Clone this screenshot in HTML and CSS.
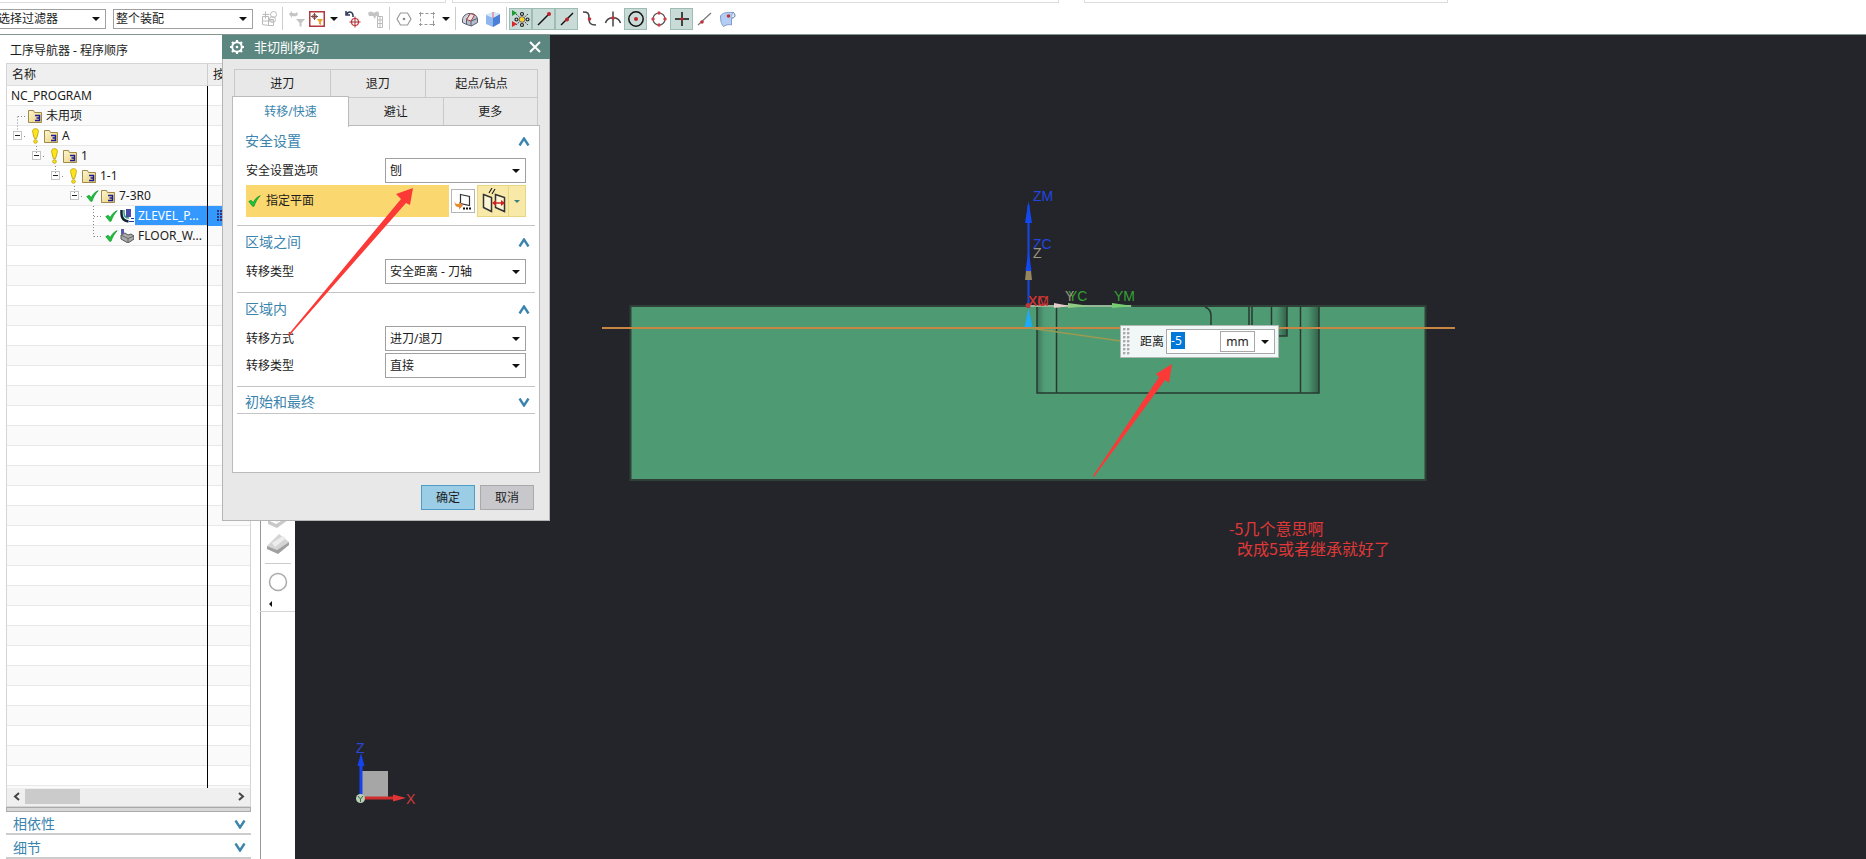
FILE: index.html
```
<!DOCTYPE html>
<html lang="zh-CN">
<head>
<meta charset="utf-8">
<title>工序导航器</title>
<link rel="stylesheet" href="styles.css">
</head>
<body>
<svg class="defs" width="0" height="0" aria-hidden="true">
  <defs>
    <linearGradient id="fold" x1="0" y1="0" x2="1" y2="1"><stop offset="0" stop-color="#fdf6cf"/><stop offset="1" stop-color="#e8cf79"/></linearGradient>
    <symbol id="folder" viewBox="0 0 14 14">
      <path d="M.5 13.500V1.500h5l1 2h7v10z" fill="url(#fold)" stroke="#a08a4a"/>
      <path d="M7 6.500h4.500v5H7M8.500 9h3" fill="none" stroke="#1c1c9a" stroke-width="1.500"/>
    </symbol>
    <symbol id="warn" viewBox="0 0 13 16">
      <path d="M6.500.7C3.500.7 3.200 3 4 5.500l1.400 5h2.200l1.400-5C9.800 3 9.500.7 6.500.7z" fill="#ffe41c" stroke="#b59a00" stroke-width=".8"/>
      <circle cx="6.500" cy="13.500" r="1.800" fill="#ffe41c" stroke="#b59a00" stroke-width=".8"/>
    </symbol>
    <symbol id="check" viewBox="0 0 13 12">
      <path d="M.8 6.500l2.400-1.200 2 2.200C7 4 9 2 12.200.7 9.500 3.500 7.500 7 6 11.300H4.600z" fill="#1fc23c" stroke="#0e9429" stroke-width=".7"/>
    </symbol>
    <symbol id="up" viewBox="0 0 12 9"><path d="M1.500 8.500 6 1.500l4.500 7" fill="none" stroke="#3a84ad" stroke-width="2.400"/></symbol>
    <symbol id="down" viewBox="0 0 12 9"><path d="M1.500.5 6 7.500l4.500-7" fill="none" stroke="#3a84ad" stroke-width="2.400"/></symbol>
  </defs>
</svg>

<header class="ribbon">
  <div class="ribbon-edges"><span class="edge edge-a"></span><span class="edge edge-b"></span><span class="edge edge-c"></span></div>
  <div class="toolbar">
    <div class="pick pick-filter"><select aria-label="选择过滤器"><option>选择过滤器</option></select></div>
    <div class="pick pick-scope"><select aria-label="整个装配"><option>整个装配</option></select></div>
    <button class="tool tool-first" aria-label="装配"><svg width="18" height="18" fill="none" stroke="#bbb"><path d="M2.500 6.500h6v9l-6-1zM8.500 9.500h5v6h-5M2.500 11h11M5.500 1.500v7M2.500 4.500h7"/><circle cx="13.500" cy="4.500" r="3"/><circle cx="12.500" cy="9.500" r="3"/></svg></button>
    <i class="sep"></i>
    <button class="tool" aria-label="重置过滤"><svg width="18" height="18" fill="#c4c4c4"><path d="M1 4l3-3v2c3 0 4 1 5-1 2 3 0 5-5 4v2zM8 9h9l-3.500 4v4l-2-1v-3z"/></svg></button>
    <button class="tool tool-boxed" aria-label="点过滤"><svg width="16" height="16"><rect x=".75" y=".75" width="14.500" height="14.500" fill="#fff" stroke="#b3383d" stroke-width="1.500"/><circle cx="5.500" cy="5.500" r="2" fill="none" stroke="#7a4a4a"/><path d="M5.500 2v7M2 5.500h7" stroke="#7a4a4a"/><path d="M8 8h6l-2 3v3l-2-1v-2z" fill="#f0a531"/></svg></button>
    <button class="tool-arrow" aria-label="更多过滤"></button>
    <button class="tool" aria-label="撤销选择"><svg width="18" height="18" fill="none"><path d="M2 1v4h4M2 5c2-4 6-4 7 0v2" stroke="#2f3a56" stroke-width="1.500"/><circle cx="11" cy="12" r="3.500" stroke="#c8383d" stroke-width="1.200"/><path d="M11 6.500v11M5.500 12h11" stroke="#a12d33"/></svg></button>
    <button class="tool" aria-label="查找"><svg width="18" height="18" fill="#c4c4c4"><path d="M1 3c2-2 4-2 6 0 2-2 4-2 5 0v3H9L8 9 6 6H2z"/><path d="M10.500 6.500h5v11h-5zM10.500 10h5M10.500 13.500h5M13 6.500v11" fill="none" stroke="#bbb"/></svg></button>
    <i class="sep"></i>
    <button class="tool" aria-label="多边形"><svg width="18" height="18"><path d="M5.500 3h7L16 9l-3.500 6h-7L2 9z" fill="none" stroke="#999" stroke-width="1.200"/><circle cx="9" cy="9" r="1.300" fill="#888"/></svg></button>
    <button class="tool" aria-label="矩形选择"><svg width="18" height="18" fill="none" stroke="#999"><rect x="2.500" y="3.500" width="13" height="11" stroke-dasharray="3 2"/><path d="M1 3.500h3M2.500 2v3M14 3.500h3M15.500 2v3M1 14.500h3M2.500 13v3M14 14.500h3M15.500 13v3"/></svg></button>
    <button class="tool-arrow" aria-label="更多选择"></button>
    <i class="sep"></i>
    <button class="tool" aria-label="面"><svg width="18" height="18" stroke="#5a5f6e"><path d="M1.500 10c0-4 4-7 8-6.500l-4 6v5l-4-2z" fill="#cfd3de"/><path d="M9.500 3.500c4 0 6 2 7 5v4l-6 3.500-5-1.500v-5z" fill="#b6bccb"/><path d="M5.500 9.500l4-6 4 1.500-3.500 6z" fill="#f3e3e3" stroke="#a44"/><path d="M10 11v5M10 11l6.500-2.500" fill="none"/></svg></button>
    <button class="tool" aria-label="实体"><svg width="18" height="18"><path d="M2 5l7-3 7 2v9l-7 4-7-3z" fill="#8fb7ef"/><path d="M9 8l7-4v9l-7 4z" fill="#4b7fd8"/><path d="M2 5l7-3 7 2-7 4z" fill="#d5e6fb"/><path d="M9 8V2" stroke="#d66"/></svg></button>
    <i class="sep"></i>
    <button class="tool on" aria-label="启用捕捉点"><svg width="20" height="20"><path d="M1 1l5 3-5 3z" fill="#1c9b32"/><path d="M1 12l5 3-5 3z" fill="#d8262c"/><path d="M5 5l12 11M17 5 5 16" stroke="#444" stroke-dasharray="2 1"/><g fill="none" stroke="#222" stroke-width="1.200"><circle cx="11" cy="5" r="1.500"/><circle cx="11" cy="16" r="1.500"/><circle cx="5.500" cy="10.500" r="1.500"/><circle cx="16.500" cy="10.500" r="1.500"/></g><circle cx="11" cy="10.500" r="2.800" fill="#ffd42a" stroke="#766"/></svg></button>
    <button class="tool on" aria-label="端点"><svg width="18" height="18"><path d="M3 15 14 4" stroke="#111" stroke-width="1.500"/><circle cx="14" cy="4" r="2" fill="#c3222b"/></svg></button>
    <button class="tool on" aria-label="中点"><svg width="18" height="18"><path d="M3 15 15 3" stroke="#111" stroke-width="1.500"/><circle cx="9" cy="9.500" r="2" fill="#c3222b"/></svg></button>
    <button class="tool" aria-label="控制点"><svg width="18" height="18"><path d="M2 2c5 0 6 1 6 6s1 7 7 7" fill="none" stroke="#444" stroke-width="1.500"/><circle cx="8.500" cy="9" r="1.800" fill="#c3323a"/></svg></button>
    <button class="tool" aria-label="交点"><svg width="18" height="18"><path d="M9 1.500v15M1.500 13c2-7 13-7 15 0" fill="none" stroke="#444" stroke-width="1.500"/><circle cx="9" cy="8" r="1.800" fill="#c3323a"/></svg></button>
    <button class="tool on" aria-label="圆心"><svg width="18" height="18"><circle cx="9" cy="9" r="7.200" fill="none" stroke="#111" stroke-width="1.500"/><circle cx="9" cy="9" r="2" fill="#c3222b"/></svg></button>
    <button class="tool" aria-label="象限点"><svg width="18" height="18"><circle cx="9" cy="9" r="6" fill="none" stroke="#555" stroke-width="1.200"/><g fill="#c8434a"><circle cx="9" cy="3" r="1.700"/><circle cx="9" cy="15" r="1.700"/><circle cx="3" cy="9" r="1.700"/><circle cx="15" cy="9" r="1.700"/></g></svg></button>
    <button class="tool on" aria-label="现有点"><svg width="18" height="18"><path d="M9 2v14M2 9h14" stroke="#111" stroke-width="1.500"/><circle cx="9" cy="9" r="1.600" fill="#c3222b"/></svg></button>
    <button class="tool" aria-label="曲线上的点"><svg width="18" height="18"><path d="M2 15 15 3" stroke="#777" stroke-width="1.200"/><circle cx="6" cy="12" r="1.800" fill="#c3323a"/></svg></button>
    <button class="tool" aria-label="面上的点"><svg width="18" height="18"><path d="M1.500 6c2-3 5-4 13-3.500-3 3 0 4-2 6.500v6c-3-1-6 0-8 1.500-2-2-3-5-3-10.500z" fill="#b3cdf3" stroke="#7f9bcb"/><path d="M12.500 8c3 0 5-2 2-5.500" fill="#dfeafc" stroke="#57719c"/><circle cx="9.500" cy="6" r="1.800" fill="#c3323a"/></svg></button>
  </div>
</header>

<main class="work">
  <aside class="navigator">
    <h1 class="nav-title">工序导航器 - 程序顺序</h1>
    <div class="tree">
      <table class="tree-table">
        <thead><tr><th class="col-name">名称</th><th>按</th></tr></thead>
        <tbody>
          <tr><td><div class="node root"><span class="label">NC_PROGRAM</span></div></td><td></td></tr>
          <tr><td><div class="node unused"><svg class="ico"><use href="#folder"/></svg><span class="label">未用项</span></div></td><td></td></tr>
          <tr><td><div class="node lv1"><button class="toggle" aria-label="折叠 A"></button><svg class="status"><use href="#warn"/></svg><svg class="ico"><use href="#folder"/></svg><span class="label">A</span></div></td><td></td></tr>
          <tr><td><div class="node lv2"><button class="toggle" aria-label="折叠 1"></button><svg class="status"><use href="#warn"/></svg><svg class="ico"><use href="#folder"/></svg><span class="label">1</span></div></td><td></td></tr>
          <tr><td><div class="node lv3"><button class="toggle" aria-label="折叠 1-1"></button><svg class="status"><use href="#warn"/></svg><svg class="ico"><use href="#folder"/></svg><span class="label">1-1</span></div></td><td></td></tr>
          <tr><td><div class="node lv4"><button class="toggle" aria-label="折叠 7-3R0"></button><svg class="status"><use href="#check"/></svg><svg class="ico"><use href="#folder"/></svg><span class="label">7-3R0</span></div></td><td></td></tr>
          <tr class="selected"><td><div class="node leaf"><svg class="status"><use href="#check"/></svg><svg class="ico" viewBox="0 0 14 14"><path d="M1.500 1v4c0 5 3 7 7 7.500" fill="none" stroke="#123" stroke-width="2.500"/><path d="M4 1v3c0 3 2 5 5 5" fill="none" stroke="#3aa08a" stroke-width="1.500"/><path d="M6 0h5v8H6z" fill="#4a4aa8"/><path d="M9 12.500h5M11 9.500h3" stroke="#1d3c9a"/></svg><span class="label">ZLEVEL_P...</span></div></td><td><svg width="12" height="14" viewBox="0 0 12 14"><path d="M1 1v12M4 1v12M7 1v12" stroke="#35357c" stroke-width="2" stroke-dasharray="2 1"/></svg></td></tr>
          <tr><td><div class="node leaf"><svg class="status"><use href="#check"/></svg><svg class="ico" viewBox="0 0 14 14"><path d="M1 6l4-2 3 2 3-1 3 2v3l-6 4-7-4z" fill="#aaa" stroke="#555"/><path d="M8 9.500V13M1 6l7 3.500L14 7" fill="none" stroke="#666"/><path d="M1 0h3v5H1z" fill="#5a5ab0"/></svg><span class="label">FLOOR_W...</span></div></td><td></td></tr>
        </tbody>
      </table>
      <svg class="guides" width="110" height="160" fill="none" stroke="#8a8a8a" stroke-dasharray="1 2"><path d="M10.500 10.500v15M11 10.500h9M17 30.500h3M29.500 40v7M36 50.500h3M48.500 60v7M55 70.500h3M67.500 80v7M74 90.500h3M86.500 100v30.500M87 110.500h9M87 130.500h9"/></svg>
      <div class="hscroll"><button class="hs-btn" aria-label="向左"><svg width="7" height="9"><path d="M6 1 2 4.500 6 8" fill="none" stroke="#444" stroke-width="2"/></svg></button><span class="thumb"></span><button class="hs-btn" aria-label="向右"><svg width="7" height="9"><path d="M1 1l4 3.500L1 8" fill="none" stroke="#444" stroke-width="2"/></svg></button></div>
    </div>
    <div class="splitter"></div>
    <button class="fold-bar">相依性<svg width="12" height="9"><use href="#down"/></svg></button>
    <button class="fold-bar">细节<svg width="12" height="9"><use href="#down"/></svg></button>
  </aside>

  <div class="side-strip">
    <div class="side-tools">
      <svg width="24" height="22"><path d="M2 9 13 1l10 6-12 8z" fill="#e4e4e4"/><path d="M2 13l8 4 12-7v3l-11 8-9-4z" fill="#c9c9c9"/></svg>
      <svg width="24" height="22"><path d="M1 13 13 1l10 8-12 8z" fill="#d4d4d4"/><path d="M6 10 17 3l3 2-11 9z" fill="#ededed"/><path d="M1 13l10 4 12-8v3l-11 9-11-5z" fill="#9f9f9f"/></svg>
      <i class="side-line"></i>
      <svg width="20" height="20"><circle cx="10" cy="10" r="8.500" fill="#fff" stroke="#aaa" stroke-width="1.500"/></svg>
      <button class="side-more" aria-label="收起"></button>
    </div>
  </div>

  <section class="viewport">
    <svg class="scene" width="1571" height="824" viewBox="295 35 1571 824">
      <defs>
        <linearGradient id="gl"><stop offset="0" stop-color="#3c7558"/><stop offset=".35" stop-color="#509c76"/><stop offset="1" stop-color="#55a27b"/></linearGradient>
        <linearGradient id="gr"><stop offset="0" stop-color="#539e78"/><stop offset=".4" stop-color="#4d9671"/><stop offset="1" stop-color="#32604a"/></linearGradient>
      </defs>
      <rect x="630.500" y="306" width="795" height="174" fill="#4e9a72" stroke="#2f4037" stroke-width="2"/>
      <rect x="1037" y="307" width="20" height="86" fill="url(#gl)"/>
      <rect x="1301" y="307" width="18" height="86" fill="url(#gr)"/>
      <rect x="1271" y="307" width="16" height="29" fill="url(#gr)"/>
      <path d="M1037 307v86h282v-86M1056.500 307v86M1300.500 307v86M1205 307q6 2 6 9v18M1249 307v25M1252 307v25M1271.500 307v29h15.500v-29" fill="none" stroke="#283a31" stroke-width="1.500"/>
      <path d="M602 328h853" stroke="#c78642" stroke-width="2"/>
      <path d="M1029 328l92 13" stroke="#9a9a52" stroke-width="1.500"/>
      <path d="M1028.500 205v103" stroke="#1648e8" stroke-width="2"/>
      <path d="M1028.500 201l3.500 22h-7zM1028.500 250l3 21h-6z" fill="#1148f0"/>
      <path d="M1026 271h5l1 9h-7z" fill="#94875f"/>
      <path d="M1028.500 308l4 19h-8z" fill="#1eaaf5"/>
      <path d="M1026 306h105" stroke="#b9dfb8" stroke-width="1.500"/>
      <path d="M1112 303l21 3-21 2z" fill="#76cd70"/><path d="M1068 303l22 3-22 2z" fill="#8fcb85"/><path d="M1054 303l16 3-16 2z" fill="#e4cdcb"/>
      <circle cx="1028" cy="305.500" r="2.500" fill="#b53b3b"/>
      <g class="axis">
        <text x="1033" y="201" fill="#2145e0">ZM</text><text x="1033" y="249" fill="#2145e0">ZC</text><text x="1033" y="258" fill="#9c9580">Z</text>
        <text x="1028" y="306" fill="#d03535">XC</text><text x="1028" y="306" fill="#d03535">XM</text>
        <text x="1068" y="301" fill="#35a035">YC</text><text x="1065" y="301" fill="#9c9580">Y</text><text x="1114" y="301" fill="#35a035">YM</text>
        <text x="356" y="753" fill="#2848d8">Z</text><text x="406" y="804" fill="#d03a3a">X</text>
      </g>
      <rect x="362" y="771" width="26" height="27" fill="#a6a6a6"/>
      <path d="M361 798V762" stroke="#1444ee" stroke-width="3"/><path d="M361 753l3.500 13h-7z" fill="#1444ee"/>
      <path d="M361 798h36" stroke="#d02e2e" stroke-width="3"/><path d="M406 798l-13-3.500v7z" fill="#e23434"/>
      <circle cx="360.500" cy="798.500" r="4.500" fill="#bccdb8"/><path d="M358 796l2.500 3 2.500-3M360.500 799v3" stroke="#2b6e35" fill="none"/>
    </svg>
    <div class="value-box">
      <span class="grip"></span>
      <label for="dist">距离</label>
      <div class="value-field"><input id="dist" value="-5"><span class="unit">mm</span><button class="tool-arrow unit-arrow" aria-label="单位"></button></div>
    </div>
    <p class="note">-5几个意思啊<br><span class="note-more">改成5或者继承就好了</span></p>
  </section>
</main>

<section class="dialog" role="dialog" aria-label="非切削移动">
  <div class="dialog-title">
    <svg width="16" height="16"><circle cx="8" cy="8" r="4.800" fill="none" stroke="#fff" stroke-width="2"/><circle cx="8" cy="8" r="1.300" fill="#fff"/><path d="M8 1v2M8 13v2M1 8h2M13 8h2M3 3l1.500 1.500M11.500 11.500 13 13M13 3l-1.500 1.500M4.500 11.500 3 13" stroke="#fff" stroke-width="2.200"/></svg>
    <h2>非切削移动</h2>
    <button class="close" aria-label="关闭"><svg width="12" height="12"><path d="M1 1l10 10M11 1 1 11" stroke="#fff" stroke-width="2"/></svg></button>
  </div>
  <div class="dialog-body">
    <div class="tabs tabs-back"><button class="tab">进刀</button><button class="tab">退刀</button><button class="tab tab-wide">起点/钻点</button></div>
    <div class="tabs tabs-front"><button class="tab active">转移/快速</button><button class="tab">避让</button><button class="tab">更多</button></div>
    <div class="pane">
      <div class="group">
        <button class="group-title">安全设置<svg width="12" height="9"><use href="#up"/></svg></button>
        <div class="field"><label for="safe">安全设置选项</label><div class="pick"><select id="safe"><option>刨</option></select></div></div>
        <div class="plane">
          <div class="plane-name"><svg width="13" height="12"><use href="#check"/></svg>指定平面</div>
          <button class="plane-dlg" aria-label="平面对话框"><svg width="18" height="18"><path d="M6.500 2.500l9 2v9l-9-2z" fill="#fff" stroke="#333" stroke-width="1.200"/><path d="M1 9c0 3 1 3 4 3V9.500l4 4-4 4V15c-3 0-5-2-4-6z" fill="#e58a32"/><path d="M9 16.500h8" stroke="#111" stroke-width="2" stroke-dasharray="2 1"/></svg></button>
          <div class="split"><button class="split-main" aria-label="按某一距离"><svg width="25" height="26"><path d="M2.500 6.500l8 3v14l-8-4zM14.500 6.500l9 3v14l-9-4z" fill="#fdf6d6" stroke="#333" stroke-width="1.500"/><path d="M8 5l3-5M11 6l3-5" stroke="#222" stroke-width="1.200"/><path d="M13 15h9" stroke="#c22" stroke-width="1.500"/><path d="M11 15l4-3v6zM24 15l-4-3v6z" fill="#c22"/></svg></button><button class="split-more" aria-label="更多平面"></button></div>
        </div>
      </div>
      <div class="group">
        <button class="group-title">区域之间<svg width="12" height="9"><use href="#up"/></svg></button>
        <div class="field"><label for="between">转移类型</label><div class="pick"><select id="between"><option>安全距离 - 刀轴</option></select></div></div>
      </div>
      <div class="group">
        <button class="group-title">区域内<svg width="12" height="9"><use href="#up"/></svg></button>
        <div class="field"><label for="mode">转移方式</label><div class="pick"><select id="mode"><option>进刀/退刀</option></select></div></div>
        <div class="field"><label for="within">转移类型</label><div class="pick"><select id="within"><option>直接</option></select></div></div>
      </div>
      <div class="group closed">
        <button class="group-title">初始和最终<svg width="12" height="9"><use href="#down"/></svg></button>
      </div>
    </div>
    <div class="actions"><button class="btn primary">确定</button><button class="btn">取消</button></div>
  </div>
</section>

<svg class="marks" width="1200" height="500" aria-hidden="true">
  <path d="M288 335 401 199l-5-5 17-6-3 17-4-2L289 336zM1093 476l66-99-3-3 16-10-3 19-4-3-71 97z" fill="#fb3a37"/>
</svg>
</body>
</html>
```

FILE: styles.css
```
* { box-sizing: border-box; }
html, body { height: 100%; margin: 0; }
body {
  display: flex;
  flex-direction: column;
  position: relative;
  overflow: hidden;
  background: #fff;
  color: #1c1c1c;
  font: 12px/16px "Noto Sans", "Noto Sans CJK SC", sans-serif;
}
button, select, input { font: inherit; color: inherit; margin: 0; }
button { padding: 0; border: 0; background: none; }
svg { display: block; flex: none; }
.defs { position: absolute; }

/* ribbon */
.ribbon { border-bottom: 1px solid #84978f; }
.ribbon-edges { display: flex; height: 3px; }
.edge { border: solid #dcdcdc; border-width: 0 1px 1px 0; }
.edge-a { width: 446px; }
.edge-b { width: 607px; margin-left: 6px; border-left-width: 1px; }
.edge-c { width: 364px; margin-left: 25px; border-left-width: 1px; }
.toolbar { display: flex; align-items: center; height: 31px; }
.pick { position: relative; height: 25px; border: 1px solid #a0a0a0; background: #fff; }
.pick select {
  appearance: none;
  width: 100%;
  height: 100%;
  padding: 0 20px 0 4px;
  border: 0;
  background: transparent;
}
.pick::after, .tool-arrow::after, .split-more::after {
  content: "";
  border: solid transparent;
  border-width: 4px 4px 0;
  border-top-color: #111;
}
.pick::after { position: absolute; right: 5px; top: 50%; margin-top: -2px; pointer-events: none; }
.toolbar .pick { height: 20px; }
.toolbar .pick select { padding-left: 2px; }
.pick-filter { width: 109px; margin: 0 7px 0 -3px; }
.toolbar .pick-filter select { padding-left: 0; }
.pick-scope { width: 140px; }
.tool, .tool-arrow { display: flex; align-items: center; justify-content: center; }
.tool { width: 23px; height: 22px; flex: none; }
.tool.on { background: #c9dbd7; border: 1px solid #9dbcb4; }
.tool-first { margin-left: 4px; }
.tool-boxed { width: 18px; }
.tool-arrow { width: 15px; height: 22px; }
.sep { width: 1px; height: 23px; margin: 0 2px; background: #ccc; }

/* main area */
.work { flex: 1; display: flex; min-height: 0; }
.navigator { width: 251px; padding-left: 6px; display: flex; flex-direction: column; flex: none; }
.nav-title { margin: 0; padding: 8px 4px 4px; font-size: 12px; line-height: 16px; font-weight: 400; }
.tree {
  position: relative;
  flex: 1;
  display: flex;
  flex-direction: column;
  justify-content: space-between;
  border: 1px solid #d5d5d5;
  padding-bottom: 2px;
  background:
    linear-gradient(#efefef, #efefef) 0 100% / 100% 18px no-repeat,
    linear-gradient(#000, #000) 200px 22px / 1px 100% no-repeat,
    repeating-linear-gradient(#fff 0 19px, #e8e8e8 19px 20px, #fafafa 20px 39px, #e8e8e8 39px 40px) 0 22px;
}
.tree-table { width: 100%; border-spacing: 0; table-layout: fixed; }
.tree-table th { height: 22px; padding: 1px 5px 0; background: #efefef; border-bottom: 1px solid #ddd; font-weight: 400; text-align: left; }
.tree-table .col-name { width: 201px; border-right: 1px solid #ccc; }
.tree-table td { height: 20px; padding: 0 0 1px; overflow: hidden; }
.tree-table td + td { padding-left: 9px; }
.node { display: flex; align-items: center; height: 19px; border-right: 1px solid #000; white-space: nowrap; overflow: hidden; }
.label { padding-left: 3px; line-height: 19px; }
.root { padding-left: 1px; }
.unused { padding-left: 21px; }
.lv1 { padding-left: 6px; }
.lv2 { padding-left: 25px; }
.lv3 { padding-left: 44px; }
.lv4 { padding-left: 63px; }
.leaf { padding-left: 98px; }
.toggle { width: 9px; height: 9px; margin-right: 7px; border: 1px solid #c4c4c4; background: linear-gradient(#222, #222) 50% 50% / 5px 1px no-repeat #fff; flex: none; }
.status { width: 13px; height: 16px; margin-right: 2px; }
.ico { width: 14px; height: 14px; margin-right: 1px; }
.selected .label { flex: 1; background: #3399ff; color: #fff; }
.selected td + td { background: #3399ff; }
.guides { position: absolute; left: 0; top: 42px; }
.hscroll { display: flex; align-items: center; height: 15px; }
.hs-btn { display: flex; align-items: center; justify-content: center; width: 18px; height: 15px; }
.thumb { width: 55px; height: 15px; background: #cbcbcb; margin-right: auto; }
.splitter { height: 5px; border: 1px solid #aaa; background: #d8d8d8; }
.fold-bar, .group-title { display: flex; align-items: center; justify-content: space-between; color: #3a84ad; font-size: 14px; line-height: 20px; text-align: left; }
.fold-bar { height: 24px; padding: 3px 5px 0 7px; border-bottom: 2px solid #ccc; }
.splitter + .fold-bar { height: 23px; }

.side-strip { display: flex; width: 44px; padding-left: 9px; flex: none; background: linear-gradient(#999, #999) 9px 0 / 1px 100% no-repeat; }
.side-tools { flex: 1; display: flex; flex-direction: column; align-items: center; gap: 4px; height: 577px; justify-content: flex-end; border-bottom: 1px solid #d5d5d5; padding-bottom: 3px; }
.side-line { width: 26px; height: 1px; margin: 4px 0; background: #ccc; }
.side-more { align-self: flex-start; height: 8px; margin: 4px 0 0 9px; }
.side-more::after { content: ""; display: block; border: solid transparent; border-width: 3px 3px 3px 0; border-right-color: #111; }

/* viewport */
.viewport { position: relative; flex: 1; min-width: 0; background: #24252a; overflow: hidden; }
.scene { position: absolute; left: 0; top: 0; }
.axis { font: 14px "Liberation Sans", Arial, sans-serif; }
.value-box { position: absolute; left: 825px; top: 290px; display: flex; align-items: center; height: 33px; padding: 0 3px 0 2px; border: 1px solid #b0b8b6; background: #f1f6f6; }
.grip { width: 7px; height: 27px; margin-right: 10px; background: radial-gradient(circle at 1px 1px, #aaa 1px, transparent 2px) 0 0 / 4px 4px; }
.value-field { display: flex; align-items: center; width: 109px; height: 25px; margin-left: 2px; padding-left: 4px; border: 1px solid #a8a8a8; background: #fff; }
.value-field input { width: 14px; height: 17px; padding: 0; border: 0; margin: 0 auto 3px 0; background: #0078d7; color: #fff; line-height: 17px; }
.unit { width: 35px; height: 21px; border: 1px solid #a8a8a8; line-height: 19px; text-align: center; }
.unit-arrow { width: 19px; }
.note { position: absolute; left: 934px; top: 483px; margin: 0; color: #e03838; font: 400 16px/20px "Noto Sans CJK SC", sans-serif; white-space: nowrap; }
.note-more { padding-left: 8px; }

/* dialog */
.dialog { position: absolute; left: 222px; top: 35px; width: 328px; background: #e8e8e8; border: 1px solid #b4b4b4; border-top: 0; }
.dialog-title { display: flex; align-items: center; height: 24px; margin: 0 -1px; padding: 0 9px 0 7px; background: #5b8780; color: #fff; }
.dialog-title h2 { flex: 1; margin: 0 0 0 9px; font-size: 13px; line-height: 20px; font-weight: 400; }
.dialog-body { padding: 10px 9px; }
.tabs { display: flex; height: 28px; }
.tab { flex: 1; border: 1px solid #c9c9c9; border-width: 1px 1px 0 0; }
.tabs-back { margin: 0 2px; border-left: 1px solid #c9c9c9; }
.tab-wide { flex: 0 0 112px; }
.tabs-front { margin-right: 2px; }
.active { position: relative; flex: 0 0 117px; height: 31px; margin: -1px 0 -2px; border: 1px solid #bbb; border-bottom: 0; background: #fff; color: #3a84ad; }
.pane { min-height: 348px; padding: 0 4px; border: 1px solid #bbb; background: #fff; }
.group { padding: 4px 9px 8px 8px; border-bottom: 1px solid #c4c4c4; }
.group:first-child { padding-top: 3px; }
.closed { padding-bottom: 0; }
.group-title { width: 100%; height: 24px; margin-bottom: 5px; padding: 0; }
.group-title svg { margin-right: -4px; }
.closed .group-title { height: 22px; margin: 0; }
.field { display: flex; align-items: center; justify-content: space-between; padding-left: 1px; }
.field + .field, .plane { margin-top: 2px; }
.field .pick { width: 141px; }
.plane { display: flex; align-items: center; height: 32px; margin-left: 1px; }
.plane-name { flex: 1; display: flex; align-items: center; gap: 5px; height: 32px; padding-left: 2px; background: #fbd86f; }
.plane-dlg { display: flex; align-items: center; justify-content: center; width: 24px; height: 24px; margin: 0 2px; border: 1px solid #b5b5b5; background: #fff; }
.split { display: flex; height: 32px; border: 1px solid #e8d680; background: #f9e9a9; }
.split-main { display: flex; align-items: center; justify-content: center; width: 30px; }
.split-more { display: flex; align-items: center; justify-content: center; width: 17px; border-left: 1px solid #e8d680; }
.split-more::after { border-width: 3px 3px 0; border-top-color: #3f7f78; }
.actions { display: flex; justify-content: flex-end; gap: 5px; padding: 12px 6px 0 0; }
.btn { width: 54px; height: 25px; border: 1px solid #a9a9a9; background: #c8c8cc; }
.primary { border-color: #4f9cc4; background: #9bcde6; }

.marks { position: absolute; left: 0; top: 0; pointer-events: none; }
```
